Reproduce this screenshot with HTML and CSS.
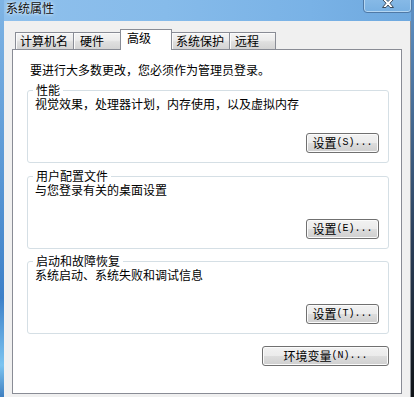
FILE: index.html
```html
<!DOCTYPE html>
<html lang="zh-CN">
<head>
<meta charset="utf-8">
<title>系统属性</title>
<link rel="stylesheet" href="styles.css">
</head>
<body>
<div class="window">
  <div class="titlebar">
    <span class="title">系统属性</span>
    <div class="close">
      <svg width="14" height="9" viewBox="0 0 14 9">
        <path d="M1.5 0.5 H5 L7 2.5 L9 0.5 H12.5 L9 4.2 L12.5 8.5 H9 L7 6 L5 8.5 H1.5 L5 4.2 Z" fill="#fff" stroke="#3b4a5c" stroke-width="1"/>
      </svg>
    </div>
  </div>
  <div class="client">
    <div class="tabs">
      <div class="tab t1">计算机名</div>
      <div class="tab t2">硬件</div>
      <div class="tab t3 active">高级</div>
      <div class="tab t4">系统保护</div>
      <div class="tab t5">远程</div>
    </div>
    <div class="panel">
      <div class="intro">要进行大多数更改，您必须作为管理员登录。</div>
      <div class="group">
        <div class="gtitle">性能</div>
        <div class="gdesc">视觉效果，处理器计划，内存使用，以及虚拟内存</div>
        <div class="btn gbtn">设置<span class="mn">(S)...</span></div>
      </div>
      <div class="group">
        <div class="gtitle">用户配置文件</div>
        <div class="gdesc">与您登录有关的桌面设置</div>
        <div class="btn gbtn">设置<span class="mn">(E)...</span></div>
      </div>
      <div class="group g3">
        <div class="gtitle">启动和故障恢复</div>
        <div class="gdesc">系统启动、系统失败和调试信息</div>
        <div class="btn gbtn">设置<span class="mn">(T)...</span></div>
      </div>
      <div class="btn envbtn">环境变量<span class="mn">(N)...</span></div>
    </div>
  </div>
</div>
</body>
</html>
```

FILE: styles.css
```css
html, body {
  margin: 0;
  padding: 0;
}
body {
  width: 414px;
  height: 397px;
  overflow: hidden;
  font-family: "Noto Sans CJK SC", "Noto Sans", sans-serif;
  font-size: 12px;
  color: #000;
}
.window {
  width: 414px;
  height: 397px;
  display: flex;
  flex-direction: column;
  background:
    linear-gradient(to bottom, #5f93c8 0%, #2b3f5a 60%, #101418 100%) right top / 3px 100% no-repeat,
    linear-gradient(to bottom, #7fb4e4 0%, #5d9ad6 40%, #3d80c8 75%, #7cc4f0 92%, #3f7fc0 100%) left top / 4px 100% no-repeat,
    linear-gradient(to right, #8fc0ec 0%, #86bbea 40%, #79b2e6 75%, #6ea8de 100%);
}
.titlebar {
  height: 21px;
  display: flex;
  align-items: flex-start;
  padding-left: 6px;
  flex: none;
}
.title {
  line-height: 12px;
  margin-top: 2px;
  color: #111;
  text-shadow: 0 0 3px #e8f4ff, 0 0 5px #d8ecff;
}
.close {
  margin-left: auto;
  margin-right: 2px;
  margin-top: -6px;
  border: 1px solid #4f79a6;
  border-radius: 0 0 4px 4px;
  background: linear-gradient(#8cbde8, #78b0e2);
  box-shadow: inset 0 0 0 1px #b4d6f2;
  display: flex;
  justify-content: center;
  align-items: flex-end;
  padding-bottom: 2px;
  box-sizing: border-box;
  height: 19px;
  width: 49px;
}
.close svg {
  display: block;
  margin-bottom: 2px;
}
.client {
  flex: 1;
  margin: 0 3px 0 4px;
  background: #f0f0f0;
  padding: 8px 8px 3px 8px;
  box-sizing: border-box;
  display: flex;
  flex-direction: column;
  border-right: 1px solid #8a8f96;
}
.tabs {
  display: flex;
  align-items: flex-end;
  height: 20px;
  padding-left: 3px;
  flex: none;
}
.tab {
  box-sizing: border-box;
  height: 17px;
  border: 1px solid #898c95;
  border-bottom: none;
  background: linear-gradient(#f4f4f4 0%, #ececec 45%, #dfdfdf 55%, #d4d4d4 100%);
  box-shadow: inset 1px 1px 0 #fbfbfb;
  line-height: 14px;
  padding-top: 1px;
  white-space: nowrap;
  margin-left: -1px;
}
.t1 { width: 59px; padding-left: 4px; margin-left: 0; }
.t2 { width: 48px; padding-left: 6px; }
.t3 { width: 52px; padding-left: 6px; }
.t4 { width: 59px; padding-left: 4px; }
.t5 { width: 47px; padding-left: 5px; }
.tab.active {
  height: 21px;
  margin-bottom: -1px;
  background: #fff;
  box-shadow: none;
  position: relative;
  z-index: 1;
  padding-top: 1px;
}
.panel {
  flex: 1;
  background: #fff;
  border: 1px solid #898c95;
  padding: 13px 12px 0 14px;
  display: flex;
  flex-direction: column;
}
.intro {
  line-height: 14px;
  padding-left: 3px;
}
.group {
  margin-top: 13px;
  height: 73px;
  box-sizing: border-box;
  border: 1px solid #d5dfe5;
  border-radius: 3px;
  display: flex;
  flex-direction: column;
  align-items: flex-start;
}
.g3 {
  margin-top: 12px;
}
.gtitle {
  margin-top: -7px;
  margin-left: 5px;
  padding: 0 3px;
  background: #fff;
  line-height: 12px;
}
.gdesc {
  margin-top: 2px;
  padding-left: 7px;
  line-height: 12px;
}
.btn {
  box-sizing: border-box;
  height: 20px;
  border: 1px solid #707070;
  border-radius: 3px;
  background: linear-gradient(#f2f2f2 0%, #ebebeb 50%, #dddddd 51%, #cfcfcf 100%);
  box-shadow: inset 0 0 0 1px #fbfbfb;
  display: flex;
  align-items: center;
  justify-content: center;
  line-height: 14px;
  white-space: nowrap;
}
.mn {
  font-family: "Liberation Mono", "DejaVu Sans Mono", monospace;
  font-size: 10px;
}
.gbtn {
  width: 73px;
  margin-top: auto;
  margin-bottom: 9px;
  align-self: flex-end;
  margin-right: 9px;
}
.envbtn {
  width: 127px;
  margin-top: 12px;
  align-self: flex-end;
}
```
